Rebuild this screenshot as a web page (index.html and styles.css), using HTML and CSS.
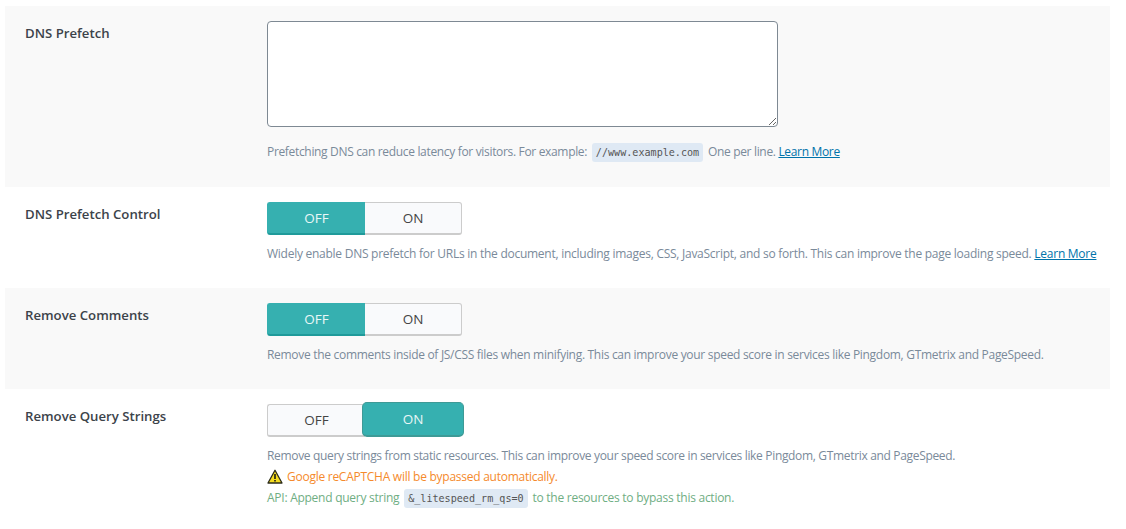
FILE: index.html
```html
<!DOCTYPE html>
<html lang="en">
<head>
<meta charset="utf-8">
<title>Optimize Settings</title>
<link rel="stylesheet" href="styles.css">
</head>
<body>
<div class="settings">
  <section class="row row-first">
    <div class="label">DNS Prefetch</div>
    <div class="field">
      <textarea class="box"></textarea>
      <div class="desc desc-area desc-tight">Prefetching DNS can reduce latency for visitors. For example: <code class="code">//www.example.com</code> One per line. <a href="#" class="link">Learn More</a></div>
    </div>
  </section>
  <section class="row">
    <div class="label">DNS Prefetch Control</div>
    <div class="field">
      <div class="toggle"><span class="opt opt-off active">OFF</span><span class="opt opt-on">ON</span></div>
      <div class="desc">Widely enable DNS prefetch for URLs in the document, including images, CSS, JavaScript, and so forth. This can improve the page loading speed. <a href="#" class="link">Learn More</a></div>
    </div>
  </section>
  <section class="row">
    <div class="label">Remove Comments</div>
    <div class="field">
      <div class="toggle"><span class="opt opt-off active">OFF</span><span class="opt opt-on">ON</span></div>
      <div class="desc desc-snug">Remove the comments inside of JS/CSS files when minifying. This can improve your speed score in services like Pingdom, GTmetrix and PageSpeed.</div>
    </div>
  </section>
  <section class="row">
    <div class="label">Remove Query Strings</div>
    <div class="field">
      <div class="toggle"><span class="opt opt-off">OFF</span><span class="opt opt-on active">ON</span></div>
      <div class="desc desc-tight">Remove query strings from static resources. This can improve your speed score in services like Pingdom, GTmetrix and PageSpeed.</div>
      <div class="desc warn"><svg class="warn-icon" width="16" height="15" viewBox="0 0 16 15"><path d="M8 1.2 15 14H1Z" fill="#f5dc1e" stroke="#2b2b1a" stroke-width="1.3" stroke-linejoin="round"/><path d="M8 5v5M8 11v1.6" stroke="#1c1c14" stroke-width="1.6"/></svg> Google reCAPTCHA will be bypassed automatically.</div>
      <div class="desc api">API: Append query string <code class="code">&amp;_litespeed_rm_qs=0</code> to the resources to bypass this action.</div>
    </div>
  </section>
</div>
</body>
</html>
```
FILE: styles.css
```css
html, body { margin: 0; padding: 0; background: #fff; }
body { font-family: "Open Sans", "Noto Sans", sans-serif; color: #444; height: 529px; overflow: hidden; }
.settings { margin: 6px 16px 0 5px; }
.row { display: grid; grid-template-columns: 242px 1fr; padding: 15px 0 0 20px; height: 101px; box-sizing: border-box; }
.row:nth-child(odd) { background: #f9f9f9; }
.row-first { height: 181px; }
.label { font-size: 13.2px; font-weight: 600; line-height: 24px; color: #3c434a; }
.field { min-width: 0; }
.box { display: block; width: 511px; height: 106px; box-sizing: border-box; border: 1px solid #7e8993; border-radius: 4px; background: #fff; margin: 0; padding: 2px 6px; }
.toggle { display: flex; width: 195px; height: 33px; margin-bottom: 8px; }
.opt { flex: 1; display: flex; align-items: center; justify-content: center; font-size: 13.5px; color: #444; background: #f9fafc; border: 1px solid #ccc; border-bottom-width: 2px; box-sizing: border-box; }
.opt-off { flex: 0 0 98px; border-radius: 3px 0 0 3px; border-right: 0; }
.opt-on { border-radius: 0 3px 3px 0; border-left: 0; }
.opt.active { background: #36b0b0; color: #e9f7f7; border-color: #36b0b0; border-bottom-color: #1f9a9a; }
.opt-on.active { flex: 0 0 102px; margin: -2px -2px 0 -3px; border: 1px solid #3e9a96; border-bottom-width: 2px; border-radius: 5px; }
.desc { font-size: 12px; letter-spacing: -0.26px; line-height: 21px; color: #7a8a9a; white-space: nowrap; }
.desc-area { margin-top: 14px; }
.desc-snug { letter-spacing: -0.3px; }
.desc-tight { letter-spacing: -0.33px; }
.warn { color: #f58a2c; display: flex; align-items: center; gap: 4px; }
.warn-icon { flex: none; }
.api { color: #6fae83; }
.code { font-family: "DejaVu Sans Mono", monospace; font-size: 10.1px; letter-spacing: 0; color: #555; background: #dfe9f4; border-radius: 3px; padding: 4px 4px; margin: 0 2px; }
.link { color: #0073aa; }
```
